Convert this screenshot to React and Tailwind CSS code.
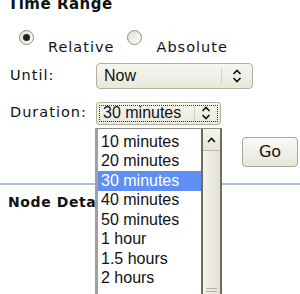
import React from 'react'

const UpDown = ({ className = '' }) => (
  <svg width="10" height="14" viewBox="0 0 10 14" className={className}>
    <path d="M1.5 5 L5 1.5 L8.5 5" fill="none" stroke="#111" strokeWidth="1.6" />
    <path d="M1.5 9 L5 12.5 L8.5 9" fill="none" stroke="#111" strokeWidth="1.6" />
  </svg>
)

const Radio = ({ checked }) => (
  <span className="w-[15px] h-[15px] rounded-full border border-[#8e8e80] bg-gradient-to-br from-[#e0dfd5] to-white flex items-center justify-center">
    {checked && <span className="w-[7px] h-[7px] rounded-full bg-[#222]" />}
  </span>
)

const OPTIONS = ['10 minutes', '20 minutes', '30 minutes', '40 minutes', '50 minutes', '1 hour', '1.5 hours', '2 hours']

export default function App() {
  const label = "font-['DejaVu_Sans',sans-serif] text-[14.5px] tracking-[1px] text-[#111]"
  const field = "font-['Liberation_Sans',Arial,sans-serif] text-[16px] text-[#111]"

  return (
    <div className="relative w-[300px] h-[294px] overflow-hidden bg-white">
      <div className="pl-[8px] -mt-[5px] font-['DejaVu_Sans',sans-serif] font-bold text-[15px] tracking-[0.5px] leading-[18px] text-[#111]">
        Time Range
      </div>

      {/* radio row */}
      <div className={`flex items-start mt-[17px] pl-[19px] ${label}`}>
        <Radio checked />
        <span className="ml-[14px] mt-[7px]">Relative</span>
        <span className="ml-[13px]"><Radio /></span>
        <span className="ml-[14px] mt-[7px]">Absolute</span>
      </div>

      {/* until */}
      <div className="flex items-center mt-[4px] pl-[10px]">
        <span className={`${label} w-[86px]`}>Until:</span>
        <div className="w-[157px] h-[26px] rounded-[4px] border border-[#b1b09a] bg-gradient-to-b from-[#f7f6ef] to-[#e9e8dc] flex items-center">
          <span className={`${field} pl-[7px] flex-1`}>Now</span>
          <span className="w-[1px] h-[18px] bg-white border-l border-[#d6d4c2]" />
          <span className="w-[30px] flex justify-center"><UpDown /></span>
        </div>
      </div>

      {/* duration */}
      <div className="flex items-center mt-[13px] pl-[10px]">
        <span className={`${label} w-[86px]`}>Duration:</span>
        <div className="w-[125px] h-[23px] rounded-[3px] border border-[#b1b09a] bg-gradient-to-b from-[#f7f6ef] to-[#e9e8dc] flex items-center p-[2px]">
          <div className="flex-1 h-full border border-dotted border-[#333] flex items-center">
            <span className={`${field} pl-[3px] flex-1 leading-none`}>30 minutes</span>
            <span className="w-[1px] h-[15px] bg-[#d6d4c2]" />
            <span className="w-[22px] flex justify-center"><UpDown /></span>
          </div>
        </div>
      </div>

      {/* go */}
      <div className="flex justify-end pr-[2px] mt-[12px]">
        <button className="w-[56px] h-[30px] rounded-[4px] border border-[#a8a792] bg-gradient-to-b from-[#fbfaf5] to-[#e7e6da] font-['DejaVu_Sans',sans-serif] text-[16px] text-[#111]">
          Go
        </button>
      </div>

      <div className="mt-[16px] h-[2px] bg-[#aac0da]" />

      <div className="w-[95px] overflow-hidden whitespace-nowrap pl-[8px] mt-[7px] font-['DejaVu_Sans',sans-serif] font-bold text-[14px] tracking-[0.6px] text-[#111]">
        Node Details
      </div>

      {/* open dropdown list */}
      <div className="absolute left-[95px] top-[128px] w-[127px] h-[170px] bg-white border-l-[3px] border-[#a0a0a0] border-t border-t-[#888] flex">
        <div className="flex-1 pt-[3px]">
          {OPTIONS.map((o) => (
            <div
              key={o}
              className={`h-[19.5px] pl-[3px] flex items-center ${field} ${o === '30 minutes' ? 'bg-[#5f8ef5] text-white' : ''}`}
            >
              {o}
            </div>
          ))}
        </div>
        <div className="w-[21px] h-full border-l-[2px] border-r-[2px] border-[#6e6d5e] bg-gradient-to-r from-[#f3f2ea] to-[#e3e2d3] flex flex-col">
          <div className="h-[22px] border-b border-[#b9b8a5] bg-gradient-to-b from-[#f7f6ee] to-[#e6e5d7] flex justify-center items-center">
            <svg width="9" height="6" viewBox="0 0 9 6">
              <path d="M1 5 L4.5 1.5 L8 5" fill="none" stroke="#111" strokeWidth="1.6" />
            </svg>
          </div>
          <div className="flex-1" />
          <div className="flex flex-col items-center gap-[2px] pb-[6px]">
            <span className="w-[11px] h-[1px] bg-[#b5b4a0]" />
            <span className="w-[11px] h-[1px] bg-[#b5b4a0]" />
          </div>
        </div>
      </div>
    </div>
  )
}
